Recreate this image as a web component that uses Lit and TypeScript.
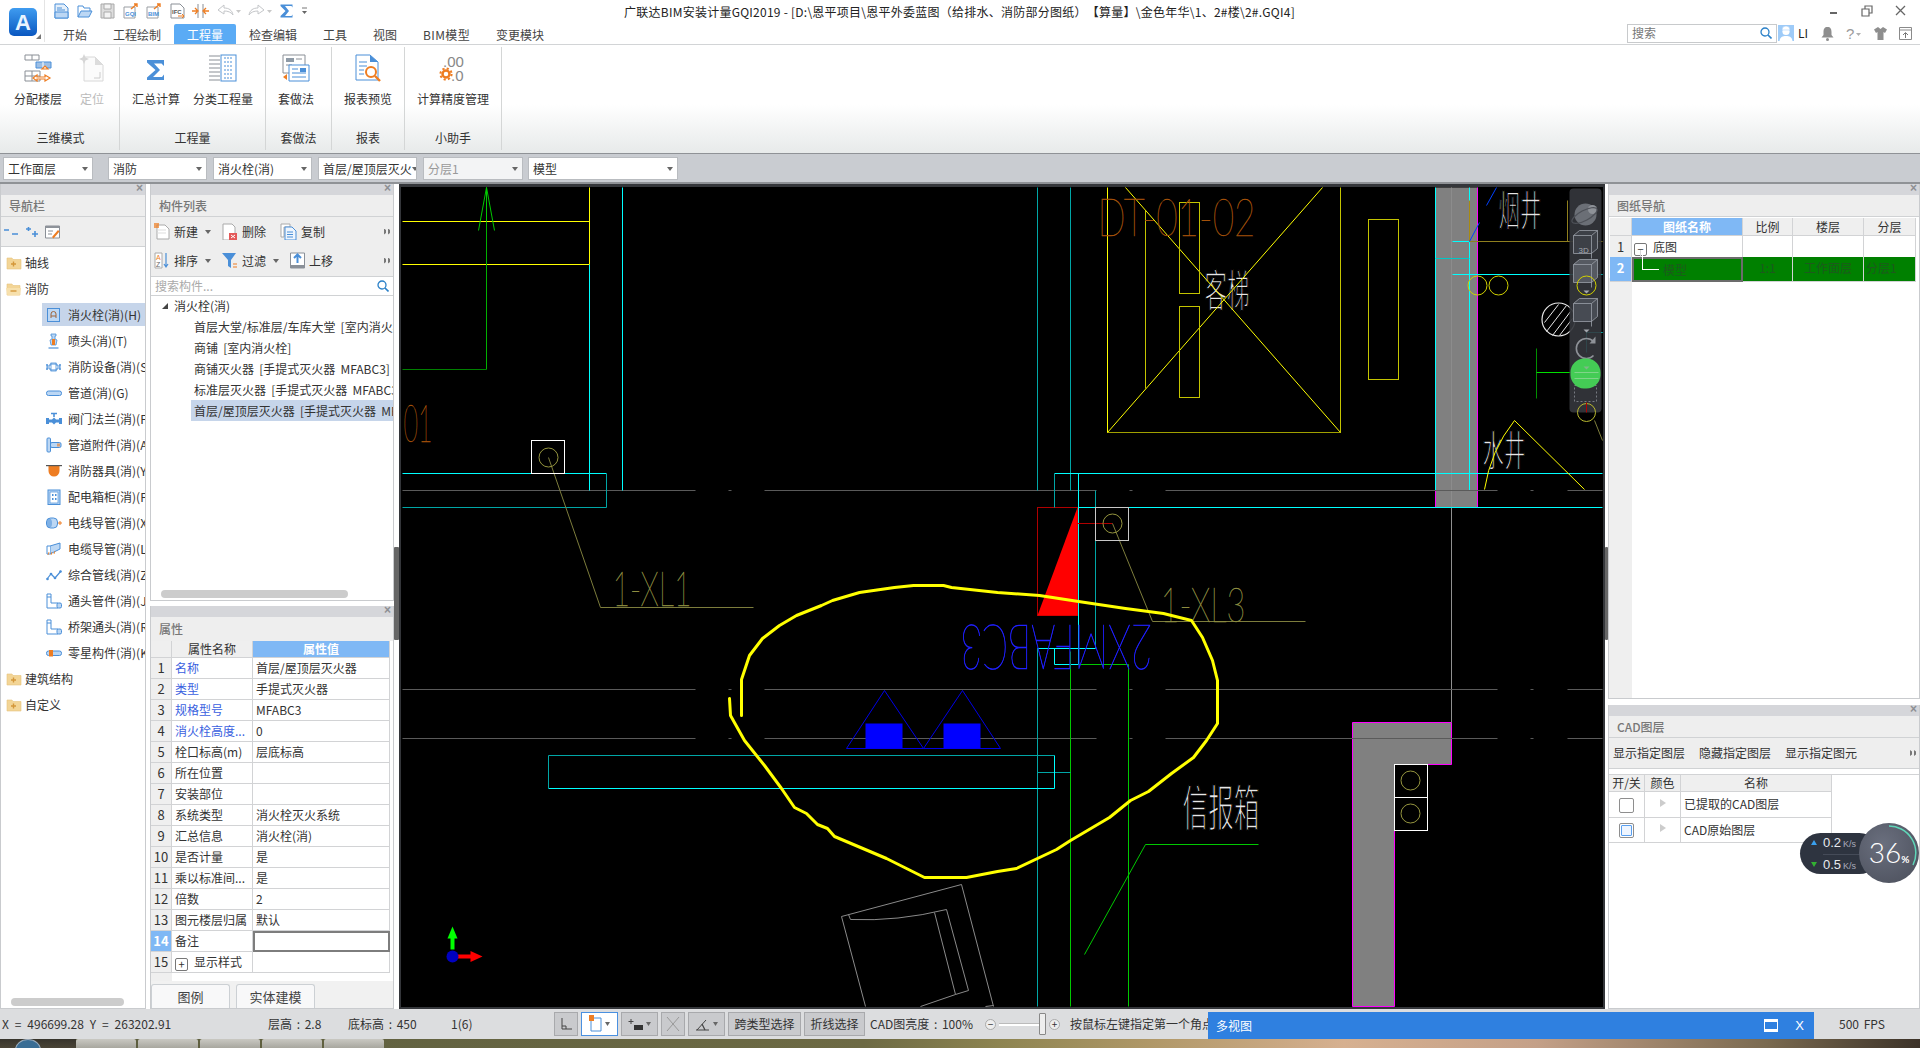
import { LitElement, html, css, svg } from 'lit';
import { customElement } from 'lit/decorators.js';

const BLUE = '#4a8fd8';
const PALE = '#bcd7f4';
const ORANGE = '#ee7d22';
const GRAY = '#8a8f96';

const ico = (w: number, h: number, body: unknown) =>
  html`<svg class="ico" width=${w} height=${h} viewBox="0 0 ${w} ${h}">${body}</svg>`;

const folder = (open: boolean, mark: string) => ico(16, 16, svg`
  <path d="M1 3h5l1 1.5h${open ? 7 : 8}V14H1z" fill="#f3d596" stroke="#e6c27c" stroke-width=".6"/>
  ${open ? svg`<path d="M0 7h15l-1.5 7.5H1.5z" fill="#f7e0ac"/>` : ''}
  <path d="${mark}" stroke="#d4973a" stroke-width="1.4" fill="none"/>`);

const navIcons = [
  svg`<rect x="1.5" y="1.5" width="12" height="13" fill="${PALE}" stroke="${BLUE}"/><path d="M5 11V7a2.5 2.5 0 015 0v4M5 9h5" fill="none" stroke="#a0643a"/>`,
  svg`<path d="M5 1h5v2H9v3l2 1-1 5H5L4 7l2-1V3H5z" fill="${PALE}" stroke="${BLUE}" stroke-width=".8"/><rect x="6" y="6" width="3" height="6" fill="${ORANGE}"/><path d="M2.5 15h10" stroke="${BLUE}" stroke-width="1.2"/>`,
  svg`<path d="M4 5h7v2h3V5v6-2h-3v2H4V9H1v2-6 2h3z" fill="none" stroke="${BLUE}"/><rect x="5" y="4" width="5" height="8" fill="none" stroke="${BLUE}" stroke-width=".8"/>`,
  svg`<rect x="0.5" y="6" width="15" height="4.5" rx="2" fill="${PALE}" stroke="${BLUE}"/>`,
  svg`<path d="M0 7h3v1.5h3l2-2 2 2h3V7h3v6h-3v-1.5H10l-2 2-2-2H3V13H0z" fill="${BLUE}"/><path d="M8 6V3M5 2.5h6" stroke="${BLUE}" stroke-width="1.6"/>`,
  svg`<rect x="1" y="1" width="3.5" height="14" rx="1" fill="${PALE}" stroke="${BLUE}"/><rect x="4.5" y="5.5" width="10.5" height="5" rx="1.5" fill="${PALE}" stroke="${BLUE}"/><rect x="11" y="6.5" width="3" height="3" fill="${ORANGE}" opacity=".6"/>`,
  svg`<path d="M0 2h16l-2.5 1v5a5.5 5.5 0 01-11 0V3z" fill="${ORANGE}"/><rect x="0" y="2" width="16" height="1.2" fill="#555"/>`,
  svg`<rect x="2" y="1" width="12" height="14.5" fill="${PALE}" stroke="${BLUE}"/><rect x="4" y="3" width="8" height="11" fill="#fff" stroke="${BLUE}" stroke-width=".7"/><path d="M6 5h1.5v2H6zM9 5h1.5v2H9zM6 9h1.5v2H6zM9 9h1.5v2H9z" fill="${BLUE}"/>`,
  svg`<rect x="0.5" y="3" width="11" height="10" rx="4" fill="${PALE}" stroke="${BLUE}"/><ellipse cx="3.5" cy="8" rx="2.5" ry="4.5" fill="${BLUE}" opacity=".55"/><path d="M12 8h4M14 6v4" stroke="${ORANGE}"/>`,
  svg`<path d="M4 5l10-3v6L4 13z" fill="${PALE}" stroke="${BLUE}"/><path d="M4 5h-3v8h3" fill="#fff" stroke="${BLUE}"/><path d="M2 14l1-3M5 14l1-3M8 13l1-3" stroke="${ORANGE}" stroke-width=".8"/>`,
  svg`<path d="M1 12l4-5 4 4 6-7" fill="none" stroke="${BLUE}" stroke-width="1.2"/><circle cx="1.5" cy="12" r="1.3" fill="${BLUE}"/><circle cx="5" cy="7" r="1.3" fill="${BLUE}"/><circle cx="9" cy="11" r="1.3" fill="${BLUE}"/><circle cx="14.5" cy="4.5" r="1.3" fill="${BLUE}"/>`,
  svg`<path d="M1 1h4v9h7v5H1z" fill="#fff" stroke="${BLUE}"/><rect x="11" y="10" width="4.5" height="5" rx="1.5" fill="${PALE}" stroke="${BLUE}"/><path d="M1 4h4" stroke="${BLUE}"/>`,
  svg`<path d="M1 1h4v9h7v5H1z" fill="#fff" stroke="${BLUE}"/><rect x="11" y="10" width="4.5" height="5" rx="1.5" fill="${PALE}" stroke="${BLUE}"/><path d="M1 4h4" stroke="${BLUE}"/>`,
  svg`<rect x="0.5" y="6" width="15" height="4.5" rx="2" fill="${PALE}" stroke="${BLUE}"/><rect x="3" y="5" width="4" height="6.5" fill="${ORANGE}"/>`,
];

const navItems = ['消火栓(消)(H)', '喷头(消)(T)', '消防设备(消)(S)', '管道(消)(G)', '阀门法兰(消)(F)', '管道附件(消)(A)', '消防器具(消)(Y)',
  '配电箱柜(消)(P)', '电线导管(消)(X)', '电缆导管(消)(L)', '综合管线(消)(Z)', '通头管件(消)(J)', '桥架通头(消)(R)', '零星构件(消)(K)'];

const compItems = ['首层大堂/标准层/车库大堂 [室内消火栓]', '商铺 [室内消火栓]', '商铺灭火器 [手提式灭火器 MFABC3]',
  '标准层灭火器 [手提式灭火器 MFABC3]', '首层/屋顶层灭火器 [手提式灭火器 MFABC3]'];

const propRows: [string, string, boolean][] = [
  ['名称', '首层/屋顶层灭火器', true], ['类型', '手提式灭火器', true], ['规格型号', 'MFABC3', true], ['消火栓高度...', '0', true],
  ['栓口标高(m)', '层底标高', false], ['所在位置', '', false], ['安装部位', '', false], ['系统类型', '消火栓灭火系统', false],
  ['汇总信息', '消火栓(消)', false], ['是否计量', '是', false], ['乘以标准间...', '是', false], ['倍数', '2', false],
  ['图元楼层归属', '默认', false], ['备注', '', false],
];

const CY = '#00ffff';
const TL = '#00a6a6';
const YE = '#ffff00';
const DY = '#c4c400';
const OL = '#7d7d3c';
const GR = '#00c800';
const LG = '#5a5a5a';
const MG = '#ff00ff';

const cadLines: [number, number, number, number, string][] = [
  [589, 187, 589, 264, YE], [402, 221, 589, 221, YE], [402, 264, 589, 264, YE], [589, 264, 589, 490, CY], [622, 187, 622, 490, CY],
  [486, 221, 486, 369, '#00b000'], [402, 369, 486, 369, '#008000'], [486, 187, 478, 230, GR], [486, 187, 494, 230, GR], [486, 187, 486, 221, GR],
  [402, 473, 606, 473, CY], [606, 473, 606, 507, TL], [402, 507, 606, 507, TL],
  [1037, 187, 1037, 490, TL], [1070, 187, 1070, 490, TL], [1054, 473, 1602, 473, CY], [1054, 473, 1054, 507, TL], [1078, 507, 1602, 507, CY],
  [1078, 473, 1078, 664, CY], [1095, 490, 1095, 648, TL], [1037, 648, 1037, 1006, TL], [1037, 648, 1095, 648, CY], [1054, 648, 1054, 664, CY], [1054, 664, 1078, 664, CY],
  [1070, 651, 1070, 1006, GR], [1128, 664, 1128, 1006, GR], [1078, 664, 1128, 664, GR], [1037, 772, 1070, 772, TL],
  [548, 755, 1054, 755, TL], [548, 788, 1054, 788, CY], [548, 755, 548, 788, TL], [1054, 755, 1054, 788, CY],
  [1084, 954, 1145, 844, GR], [1145, 844, 1258, 844, GR],
  [1077, 523, 1112, 523, '#b00000'], [1112, 523, 1152, 621, OL], [1152, 621, 1305, 621, OL], [548, 457, 600, 607, OL], [600, 607, 753, 607, OL],
  [1452, 241, 1469, 241, CY], [1469, 241, 1602, 241, '#8f7f1e'], [1452, 274, 1602, 274, CY], [1435, 258, 1469, 258, '#00c8c8'],
  [1469, 200, 1469, 241, '#a88a10'], [1567, 200, 1567, 241, '#8f7f1e'], [1469, 241, 1479, 222, '#0040ff'], [1486, 205, 1496, 187, '#0040ff'],
  [1145, 210, 1145, 388, DY], [1107, 432, 1340, 432, '#a0a000'], [1107, 187, 1107, 432, YE], [1340, 187, 1340, 432, DY], [1107, 432, 1322, 187, YE], [1340, 432, 1125, 187, YE],
  [1514, 420, 1584, 489, YE], [1536, 348, 1536, 398, '#009000'], [1536, 372, 1600, 372, '#00e000'],
  [1586, 332, 1602, 332, CY], [1586, 332, 1586, 352, CY], [1594, 420, 1602, 440, OL],
];

const grayBreaks = [[402, 695], [728, 731], [764, 1096], [1129, 1132], [1165, 1497], [1530, 1533], [1567, 1602]];
const scribble = '741,715 741,679 749,655 762,638 779,625 796,615 821,605 832,600 859,592 894,587 913,585 943,585 951,587 997,592 1039,595 1078,601 1125,608 1163,613 1191,620 1202,637 1212,660 1217,680 1217,723 1206,740 1193,757 1171,773 1148,791 1130,800 1109,817 1070,840 1056,849 1016,868 997,871 966,877 924,877 886,858 834,836 827,828 817,824 806,813 794,807 781,788 764,765 744,740 730,715 729,698';

const cube = (y: number, h: number, face: string) => svg`
  <path d="M1573 ${y + 5}l6-5h18v${h - 5}l-6 5h-18z" fill="${face}" stroke="#9aa0a8" stroke-width=".8"/>
  <path d="M1573 ${y + 5}h18l6-5M1591 ${y + 5}v${h}" fill="none" stroke="#9aa0a8" stroke-width=".8"/>`;

const cad = svg`
  <g class="cjk thin">
    <text x="1204" y="306" font-size="44" textLength="45" lengthAdjust="spacingAndGlyphs">客梯</text>
    <text x="1498" y="225" font-size="42" textLength="43" lengthAdjust="spacingAndGlyphs">烟井</text>
    <text x="1482" y="465" font-size="42" textLength="43" lengthAdjust="spacingAndGlyphs">水井</text>
    <text x="1182" y="825" font-size="49" textLength="77" lengthAdjust="spacingAndGlyphs">信报箱</text>
  </g>
  <path d="M1352 722h99v42h-57v242h-42z" fill="#808080" stroke="${MG}"/>
  <rect x="1435" y="187" width="42" height="320" fill="#808080"/>
  <path d="M1451 187v320" stroke="#8c8c8c"/>
  <path d="M1435 187v303" stroke="${CY}"/><path d="M1435 490v17M1477 187v320" stroke="${MG}"/><path d="M1469 187v303" stroke="${CY}"/>
  <path d="M1451 507v215" stroke="#909090"/>
  ${[490, 689, 738].map(y => grayBreaks.map(([a, b]) => svg`<line x1=${a} y1=${y} x2=${b} y2=${y} stroke=${LG} stroke-width="1"/>`))}
  <rect x="1037" y="507" width="40" height="108" fill="none" stroke="#b00000"/>
  <path d="M1077 507L1037 615H1077z" fill="#ff0000"/>
  ${cadLines.map(([a, b, c, d, s]) => svg`<line x1=${a} y1=${b} x2=${c} y2=${d} stroke=${s} stroke-width="1"/>`)}
  <path d="M1514 420Q1490 450 1484 489" fill="none" stroke="${YE}"/>
  <g fill="none" stroke="${DY}"><rect x="1179" y="202" width="20" height="91"/><rect x="1179" y="306" width="20" height="91"/><rect x="1368" y="219" width="30" height="160"/></g>
  <g fill="none" stroke="#ffffff"><rect x="531" y="440" width="33" height="33"/><rect x="1394" y="764" width="33" height="33"/><rect x="1394" y="797" width="33" height="33"/></g>
  <rect x="1095" y="507" width="33" height="33" fill="none" stroke="#c8c8c8"/>
  <g fill="none" stroke="#95953f"><circle cx="548" cy="457" r="9.5"/><circle cx="1112" cy="523" r="9.5"/><circle cx="1410" cy="780" r="9.5"/><circle cx="1410" cy="813" r="9.5"/></g>
  <g fill="none" stroke="#d0d000"><circle cx="1477" cy="285" r="9.5"/><circle cx="1498" cy="285" r="9.5"/></g>
  <circle cx="1558" cy="319" r="16.5" fill="none" stroke="#e8e8e8" stroke-width="1.2"/>
  <path d="M1546 331l20-26M1552 335l18-24M1559 335l13-17M1544 322l14-18" stroke="#e8e8e8"/>
  <path d="M846 748L884 690 923 748zM923 748L962 690 1000 748z" fill="none" stroke="#0000e6"/>
  <rect x="865" y="723" width="37" height="25" fill="#0000ff"/><rect x="943" y="723" width="37" height="25" fill="#0000ff"/>
  <g fill="none" stroke="#8a8a8a">
    <path d="M841 916L961 884 993 1006M841 916L865 1006"/>
    <path d="M848 914l2 5Q897 921 946 909L968 990 955 994 920 1006M934 912L955 994M985 1006l8-1"/>
  </g>
  <g class="cad">
    <text x="403" y="441" font-size="52" fill="#a5520a" stroke="#a5520a" textLength="29" lengthAdjust="spacingAndGlyphs">01</text>
    <text x="1097" y="235" font-size="52" fill="#a5520a" stroke="#a5520a" textLength="158" lengthAdjust="spacingAndGlyphs">DT-01-02</text>
    <text x="612" y="605" font-size="48" fill="#8d8d40" stroke="#8d8d40" textLength="79" lengthAdjust="spacingAndGlyphs">1-XL1</text>
    <text x="1160" y="621" font-size="48" fill="#8d8d40" stroke="#8d8d40" textLength="85" lengthAdjust="spacingAndGlyphs">1-XL3</text>
    <text class="flip" transform="rotate(180 1056 649)" x="960" y="674" font-size="62" fill="#2020ff" stroke="#2020ff" textLength="192" lengthAdjust="spacingAndGlyphs">2XMFABC3</text>
  </g>
  <polyline points=${scribble} fill="none" stroke="${YE}" stroke-width="3" stroke-linejoin="round" stroke-linecap="round"/>
  <rect x="1569" y="188" width="32" height="224" rx="4" fill="#34363c" fill-opacity=".92"/>
  <circle cx="1585" cy="214" r="11" fill="#6b6f76"/><circle cx="1592" cy="209" r="4.5" fill="#8e9298"/><ellipse cx="1584" cy="215" rx="14" ry="5" transform="rotate(-28 1584 215)" fill="none" stroke="#4e5158" stroke-width="1.2"/>
  ${cube(230, 23, '#3d4047')}<text x="1578" y="252" font-size="8" fill="#a4a8ae" font-family="Liberation Sans">3D</text>
  ${cube(259, 23, '#565a62')}
  <path d="M1583 290h6l-3 3zM1583 329h6l-3 3z" fill="#a4a8ae"/>
  ${cube(298, 23, '#474b53')}
  <path d="M1593 341a10 10 0 100 14" fill="none" stroke="#8e9298" stroke-width="1.6"/><path d="M1595 336v7h-6z" fill="#8e9298"/>
  <rect x="1574" y="385" width="22" height="16" fill="none" stroke="#777b82" stroke-dasharray="2 2"/>
  <g fill="none" stroke="#d0d000"><circle cx="1586" cy="285" r="9.5" stroke-width="1"/></g>
  <circle cx="1586" cy="412" r="9" fill="none" stroke="#b8b830"/>
  <path d="M1586 412V402" stroke="#b00000"/>
  <path d="M1570 372a14 14 0 0114-14h3a14 14 0 0113 14v3a14 14 0 01-14 13h-3a14 14 0 01-13-13z" fill="#44cc55"/>
  <path d="M1574 372h24M1574 378h24" stroke="#9ad8a0" opacity=".7"/><path d="M1583 366h6l-3 3z" fill="#7fb888"/>
  <g>
    <path d="M452 949v-13" stroke="#00ff00" stroke-width="4"/><path d="M447 938L452 926 457 938z" fill="#00ff00"/>
    <path d="M456 956h15" stroke="#ff0000" stroke-width="4"/><path d="M470 950.5L482 956 470 961.5z" fill="#ff0000"/>
    <circle cx="452" cy="956" r="6" fill="#0000c0"/>
  </g>`;

const dbl = html`<span class="dbl"></span>`;

@customElement('app-root')
export class AppRoot extends LitElement {
  static styles = css`
    :host { display: block; width: 1920px; height: 1048px; overflow: hidden; position: relative; background: #fff; color: #333;
      font: 12px/16px "Noto Sans CJK SC", "Liberation Sans", sans-serif; }
    .ico { display: block; flex: none; }
    .head { height: 44px; display: flex; border-bottom: 1px solid #d2d4d6; }
    .logo { width: 45px; flex: none; padding: 8px 0 0 9px; box-sizing: border-box; border-right: 1px solid #e4e4e4; height: 42px; }
    .head-main { flex: 1; }
    .title-row { height: 24px; display: flex; align-items: flex-start; }
    .qat { width: 579px; flex: none; display: flex; align-items: center; height: 22px; padding-left: 9px; box-sizing: border-box; gap: 7.5px; }
    .title { line-height: 24px; color: #222; white-space: nowrap; width: 690px; text-spacing-trim: space-all; letter-spacing: .25px; }
    .winctl { margin-left: auto; display: flex; gap: 20px; padding: 4px 12px 0 0; }
    .tab-row { height: 20px; display: flex; align-items: flex-end; padding-left: 5px; position: relative; }
    .tab { height: 20px; line-height: 21px; padding: 0 13px; color: #444; }
    .tab.on { background: #5aabf5; color: #fff; border-radius: 2px 2px 0 0; }
    .tab.wide { letter-spacing: .35px; }
    .tools { margin-left: auto; display: flex; align-items: center; height: 20px; margin-bottom: 1px; padding-right: 7px; }
    .search { width: 150px; height: 19px; box-sizing: border-box; border: 1px solid #c8cacc; display: flex; align-items: center; justify-content: space-between; padding: 0 4px; color: #777; }
    .avatar { margin-left: 1px; }
    .li { margin: 0 14px 0 4px; width: 9px; color: #222; }
    .tool-i { margin-right: 12px; }
    .tool-i:last-child { margin-right: 0; }
    .ribbon { height: 108px; display: flex; background: linear-gradient(#fff 0, #fff 55%, #e7eaea 100%); border-bottom: 1px solid #8f9296; }
    .group { display: flex; flex-direction: column; padding: 0 12px; border-right: 1px solid #d4d6d6; margin: 2px 0 3px; height: 103px; box-sizing: border-box; }
    .g1 { padding-left: 14px; width: 120px; } .g2 { width: 146px; } .g3 { width: 66px; } .g4 { width: 73px; } .g5 { width: 97px; }
    .g-items { display: flex; gap: 17px; height: 78px; }
    .g2 .g-items { gap: 13px; }
    .r-item { display: flex; flex-direction: column; align-items: center; padding-top: 7px; white-space: nowrap; color: #333; }
    .r-icon { height: 37px; }
    .r-item span { line-height: 16px; }
    .dim { color: #bbb; }
    .g-label { text-align: center; line-height: 16px; padding-top: 5px; color: #333; margin: 0 -12px; }
    .combos { height: 25px; background: #c9ccd1; border-bottom: 2px solid #8f9296; display: flex; padding: 3px 0 0 3px; }
    .combo { height: 23px; box-sizing: border-box; background: #fff; border: 1px solid #b9bcc0; display: flex; align-items: center; justify-content: space-between; padding: 0 4px; color: #333; overflow: hidden; white-space: nowrap; margin-left: 6px; }
    .combo i { flex: none; width: 0; height: 0; border: 3px solid transparent; border-top: 4px solid #666; border-bottom: 0; }
    .combo.off { background: #f3f4f5; color: #999; }
    .c1 { width: 90px; margin-left: 0; } .c2 { width: 99px; margin-left: 15px; } .c3, .c4 { width: 99px; } .c5 { width: 100px; }
    .c6 { width: 150px; margin-left: 5px; }
    .main { height: 825px; display: grid; grid-template-columns: 146px 4px 244px 5px 1206px 3px 312px; }
    .col { display: flex; flex-direction: column; min-width: 0; }
    .panel { display: flex; flex-direction: column; min-height: 0; overflow: hidden; background: #fff; border: 1px solid #c9cbce; border-width: 0 1px 1px 1px; box-sizing: border-box; position: relative; }
    .closebar { height: 11px; background: #d5d6da; flex: none; position: relative; }
    .closebar::after { content: "×"; position: absolute; right: 2px; top: -3px; font: bold 12px/14px "Liberation Sans", sans-serif; color: #8d8f93; }
    .ptitle { height: 21px; line-height: 21px; flex: none; padding-left: 8px; color: #777; background: #eee; border-bottom: 1px solid #d0d2d4; font-weight: 500; }
    .nav-tools { height: 29px; flex: none; background: #eee; border-bottom: 1px solid #d0d2d4; display: flex; align-items: center; gap: 6px; padding-left: 2px; }
    .tree { flex: 1; padding-top: 3px; overflow: hidden; white-space: nowrap; min-height: 0; display: flex; flex-direction: column; }
    .folder { height: 26px; flex: none; display: flex; align-items: center; gap: 3px; padding-left: 5px; }
    .child { height: 23px; flex: none; margin: 1px 0 2px 41px; display: flex; align-items: center; gap: 6px; padding-left: 4px; overflow: hidden; }
    .child.on, .comp.on { background: #c6d5ea; }
    .nav-scroll { height: 8px; margin: 0 21px 2px 10px; border-radius: 4px; background: #ccc; flex: none; }
    .mid-tools { flex: none; background: #eee; border-bottom: 1px solid #d0d2d4; height: 59px; }
    .mt-row { height: 29px; display: flex; align-items: center; padding-left: 3px; position: relative; }
    .mt { display: flex; align-items: center; gap: 4px; }
    .mt.s11 { margin-left: 11px; } .mt.s14 { margin-left: 14px; }
    .caret { width: 0; height: 0; border: 3px solid transparent; border-top: 4px solid #666; border-bottom: 0; margin-left: 7px; }
    .dbl { position: absolute; right: 1px; top: 50%; margin-top: -3px; width: 8px; height: 6px; background:
      linear-gradient(to right, #777 0 50%, transparent 50%) 0 0 / 4px 6px repeat-x; clip-path: polygon(0 0, 50% 50%, 50% 0, 100% 50%, 50% 100%, 50% 50%, 0 100%); }
    .csearch { height: 18px; flex: none; display: flex; align-items: center; justify-content: space-between; padding: 0 4px; color: #aaa; border-bottom: 1px solid #d0d2d4; }
    .ctree { flex: 1; white-space: nowrap; overflow: hidden; }
    .ctop { height: 20px; line-height: 20px; display: flex; align-items: center; padding-left: 11px; gap: 6px; }
    .tri { width: 0; height: 0; border-left: 6px solid transparent; border-bottom: 6px solid #444; }
    .comp { height: 21px; line-height: 21px; margin-left: 40px; padding-left: 3px; word-spacing: 2.5px; overflow: hidden; }
    .h-scroll { height: 8px; flex: none; margin: 0 45px 2px 10px; border-radius: 4px; background: #ccc; }
    .gap-h { flex: none; background: #fff; }
    .gap-h.a { height: 5px; } .gap-h.b { height: 6px; }
    .comp-panel { height: 417px; flex: none; } .draw-panel { height: 515px; flex: none; } .grow { flex: 1; }
    .prop-title { border-bottom: 0; height: 24px; line-height: 23px; }
    .ptable { flex: 1; background: #fff; min-height: 0; display: flex; flex-direction: column; }
    .prow { display: grid; grid-template-columns: 21px 81px 137px; height: 21px; line-height: 20px; box-sizing: border-box; flex: none; }
    .prow > div { border-right: 1px solid #d2d3d5; border-bottom: 1px solid #d2d3d5; padding-left: 3px; overflow: hidden; white-space: nowrap; }
    .prow.hd { height: 17px; line-height: 16px; }
    .prow.hd > div { background: #efefef; text-align: center; padding: 0; }
    .prow.hd > .val { background: #7fb8f5; color: #fff; font-weight: 700; }
    .prow .no { background: #efefef; text-align: center; padding: 0; font-size: 13px; }
    .prow .no.on { background: #7fb8f5; color: #fff; font-weight: 700; }
    .link { color: #3a5fe0; }
    .edit { border: 2px solid #7d7d7d !important; }
    .pm { display: inline-flex; width: 11px; height: 11px; border: 1px solid #777; border-radius: 2px; align-items: center; justify-content: center; line-height: 10px; font-size: 11px; margin-right: 6px; vertical-align: -2px; }
    .grid-foot { flex: 1; background: linear-gradient(to right, #efefef 21px, #fff 21px); }
    .ptabs { height: 27px; flex: none; background: #f1f1f1; display: flex; gap: 6px; align-items: flex-end; padding-top: 3px; box-sizing: border-box; }
    .ptab { width: 79px; height: 24px; line-height: 23px; box-sizing: border-box; text-align: center; background: #f8f8f9; border: 1px solid #ccd0d4; border-bottom: 0; border-radius: 3px 3px 0 0; color: #444; font-size: 13px; }
    .canvas { background: #000; border-style: solid; border-color: #34363a; border-width: 3px 2px 2px 2px; position: relative; overflow: hidden; }
    .canvas svg { display: block; }
    .cad text { font-family: "Lato", "Roboto", "Liberation Sans", sans-serif; font-weight: 100; stroke-width: .45; }
    .cad text.flip { stroke-width: .7; }
    .cjk text { font-family: "Noto Sans CJK SC", sans-serif; fill: #e6e6e6; stroke: #000; stroke-width: 1.7; }
    .split { background: #fff; position: relative; }
    .split::after { content: ""; position: absolute; left: 0; right: 0; top: 363px; height: 93px; background: #666; border-radius: 1px; }
    .dtable { padding-left: 1px; }
    .drow { display: grid; grid-template-columns: 22px 111px 50px 71px 52px; height: 21px; line-height: 21px; }
    .drow > div { border-right: 1px solid #d2d3d5; border-bottom: 1px solid #d2d3d5; text-align: center; box-sizing: border-box; position: relative; white-space: nowrap; }
    .drow.hd { height: 18px; line-height: 17px; margin-top: 1px; }
    .drow.hd > div { background: #efefef; }
    .drow.hd > .val { background: #7fb8f5; color: #fff; font-weight: 700; }
    .drow .no { background: #efefef; font-size: 13px; }
    .drow .no.on { background: #7fb8f5; color: #fff; font-weight: 700; }
    .left { text-align: left !important; padding-left: 2px; }
    .g { background: #008000; color: #1d5a1d; }
    .sel { border: 2px solid #6c6c6c !important; }
    .model { padding-left: 27px; }
    .conn { position: absolute; left: 8px; top: -9px; width: 16px; height: 19px; border-left: 1px solid #fff; border-bottom: 1px solid #fff; }
    .conn.lt { border-bottom: 0; border-color: #d8d8d8; top: 14px; height: 8px; left: 8px; }
    .dfoot { flex: 1; background: linear-gradient(to right, #efefef 23px, #fff 23px); }
    .layer-tools { height: 30px; flex: none; background: #eee; border-bottom: 1px solid #d0d2d4; display: flex; align-items: center; gap: 14px; padding-left: 4px; position: relative; white-space: nowrap; font-size: 12px; }
    .lrow { display: grid; grid-template-columns: 36px 36px 151px; }
    .lrow > div { border-right: 1px solid #d2d3d5; border-bottom: 1px solid #d2d3d5; white-space: nowrap; box-sizing: border-box; display: flex; align-items: center; padding-left: 3px; }
    .lrow.hd { height: 17px; margin-top: 5px; border-top: 1px solid #d2d3d5; }
    .lrow.hd > div { background: #efefef; justify-content: center; padding: 0; line-height: 16px; }
    .lrow.b { height: 25.5px; }
    .lrow .c { justify-content: center; padding: 0; }
    .chk { width: 13px; height: 13px; border: 1px solid #8e8e8e; border-radius: 2px; margin-top: 2px; background: #fff; display: flex; align-items: center; justify-content: center; }
    .chk i { width: 9px; height: 9px; border: 1px solid #5aa0f0; border-radius: 1px; background: #eef5ff; }
    .ptri { width: 0; height: 0; border-left: 6px solid #ccc; border-top: 4px solid transparent; border-bottom: 4px solid transparent; margin-bottom: 3px; }
    .status { height: 30px; background: #dcdddf; display: flex; align-items: center; position: relative; white-space: nowrap; overflow: hidden; word-spacing: 2px; }
    .s-coord { width: 268px; padding-left: 2px; box-sizing: border-box; flex: none; word-spacing: 3.2px; }
    .s-h { width: 80px; flex: none; } .s-b { width: 103px; flex: none; } .s-n { width: 103px; flex: none; }
    .sb { height: 24px; box-sizing: border-box; background: #c9cacd; border: 1px solid #a8a9ac; display: flex; align-items: center; justify-content: center; margin-right: 3px; flex: none; gap: 2px; }
    .sb.w24 { width: 24px; } .sb.w36 { width: 37px; } .sb.sel2 { background: #fff; border: 1px solid #4a90e0; }
    .sb.t1 { width: 73px; } .sb.t2 { width: 61px; margin-right: 5px; }
    .zoom-c { width: 9px; height: 9px; border: 1px solid #aaa; border-radius: 50%; background: #eee; display: flex; align-items: center; justify-content: center; line-height: 8px; font-size: 10px; margin: 0 2px; flex: none; }
    .zoom-c.first { margin-left: 12px; }
    .track { width: 47px; height: 2px; background: #fff; border-top: 1px solid #bbb; position: relative; margin: 0 1px; flex: none; }
    .thumb { position: absolute; right: 0; top: -11px; width: 7px; height: 22px; background: #eee; border: 1px solid #888; border-radius: 1px; box-sizing: border-box; }
    .hint { margin-left: 8px; flex: none; }
    .fps { position: absolute; left: 1839px; top: 7px; }
    .multi { position: absolute; left: 1208px; top: 3px; width: 606px; height: 27px; background: #2f80e0; color: #fff; display: flex; align-items: center; padding: 0 10px 0 8px; box-sizing: border-box; }
    .multi b { font-weight: 400; flex: 1; }
    .multi .sq { width: 14px; height: 13px; box-sizing: border-box; border: 1px solid #fff; border-top-width: 3px; border-bottom-width: 3px; margin-right: 17px; }
    .multi .x { font: 13px "Liberation Sans", sans-serif; }
    .task { height: 9px; display: flex; background: linear-gradient(90deg, #5a5c3e 0, #6d6a44 45%, #8d8450 52%, #b09868 60%, #d6b090 70%, #c4a088 80%, #7a6a50 92%, #3c3228 100%); overflow: hidden; }
    .orb { width: 76px; flex: none; background: linear-gradient(#37342c, #4a4436); position: relative; }
    .orb::after { content: ""; position: absolute; left: 15px; top: 0; width: 24px; height: 20px; border-radius: 50%; background: #3a6d94; border: 1px solid #9ab; }
    .tbtn { width: 60px; margin-right: 2px; flex: none; background: linear-gradient(#c9c8c2, #a8a79f); border-radius: 2px 2px 0 0; position: relative; }
    .speed { position: absolute; left: 1800px; top: 833px; width: 120px; height: 60px; }
    .s-pill { position: absolute; left: 0; top: 0; width: 80px; height: 41px; border-radius: 21px; background: #2e3440; color: #e8eaee; font: 13px/20px "Liberation Sans", sans-serif; padding: 0 0 0 23px; box-sizing: border-box; }
    .s-pill div { height: 20.5px; line-height: 20.5px; white-space: nowrap; display: flex; gap: 1px; position: relative; }
    .s-pill div + div { border-top: 1px solid #454b58; }
    .s-pill small { font: 400 9px/22px "Liberation Sans", sans-serif; color: #aab; padding-left: 1px; }
    .s-pill em { position: absolute; left: -12px; top: 7px; width: 0; height: 0; border: 3px solid transparent; }
    .s-pill em.u { border-bottom: 5px solid #3aa0ee; border-top: 0; }
    .s-pill em.d { border-top: 5px solid #32b032; border-bottom: 0; }
    .s-circle { position: absolute; left: 59px; top: -10px; width: 60px; height: 60px; border-radius: 50%; background: radial-gradient(circle at 40% 35%, #6a6f7e, #4a4e5a); color: #fff; font: 300 28px/58px "Lato", "Liberation Sans", sans-serif; text-align: center; }
    .s-circle small { font-size: 10px; font-weight: 700; }
    .s-circle svg { position: absolute; left: 0; top: 0; }
  `;

  private qat() {
    const gdoc = (t: string) => ico(16, 16, svg`<path d="M1 4h11v11H1z" fill="#fff" stroke="#9a9ea3"/><text x="2" y="13" font-size="6" fill="#4a8fd8" font-family="Liberation Sans" font-weight="700">${t}</text><path d="M8 6l6-5M11 1h3v3" stroke="${ORANGE}" fill="none" stroke-width="1.4"/>`);
    return html`<div class="qat">
      ${ico(15, 16, svg`<path d="M1 1h9l4 4v10H1z" fill="#e4effa" stroke="${BLUE}"/><path d="M1 9h13v6H1z" fill="${PALE}" stroke="${BLUE}"/><path d="M3 5h5M3 7h8" stroke="${BLUE}"/>`)}
      ${ico(16, 16, svg`<path d="M1 14V3h5l1 2h6v3" fill="#fff" stroke="${BLUE}"/><path d="M1 14l3-6h11l-3 6z" fill="${PALE}" stroke="${BLUE}"/>`)}
      ${ico(15, 16, svg`<path d="M1 1h13v14H1z" fill="#ddd" stroke="#aaa"/><path d="M4 1h7v5H4zM4 9h7v6H4z" fill="#f3f3f3" stroke="#aaa"/>`)}
      ${gdoc('GQI')}${gdoc('BIM')}
      ${ico(15, 16, svg`<path d="M1 1h9l4 4v10H1z" fill="#fff" stroke="#8a8f96"/><text x="2" y="11" font-size="6" fill="#555" font-family="Liberation Sans" font-weight="700">IFC</text><path d="M8 13h6M12 11l2 2-2 2" stroke="${ORANGE}" fill="none"/>`)}
      ${ico(17, 16, svg`<path d="M6 1v14M11 1v14" stroke="#8a8f96"/><path d="M0 8h5M3 5l3 3-3 3M17 8h-5M14 5l-3 3 3 3" fill="none" stroke="${ORANGE}" stroke-width="1.3"/>`)}
      ${ico(24, 16, svg`<path d="M1 7l6-5v3c5 0 8 2 9 7-2-3-5-4-9-4v3z" fill="#fff" stroke="#c4c6c9"/><path d="M19 7h5l-2.500 3z" fill="#c8c8c8"/>`)}
      ${ico(24, 16, svg`<path d="M16 7l-6-5v3c-5 0-8 2-9 7 2-3 5-4 9-4v3z" fill="#fff" stroke="#c4c6c9"/><path d="M19 7h5l-2.500 3z" fill="#c8c8c8"/>`)}
      ${ico(14, 14, svg`<path d="M.5.5h12v3l-1-1.500H5L9 7 5 12h6.500l1-1.500v3H.5v-1.500L5.500 7 .5 2z" fill="${BLUE}"/>`)}
      ${ico(7, 10, svg`<path d="M1 2h5" stroke="#777"/><path d="M1 5h5l-2.500 3z" fill="#666"/>`)}
    </div>`;
  }

  private head() {
    const title = '广联达BIM安装计量GQI2019 - [D:\\恩平项目\\恩平外委蓝图（给排水、消防部分图纸）【算量】\\金色年华\\1、2#楼\\2#.GQI4]';
    return html`<div class="head">
      <div class="logo">
        <svg class="ico" width="32" height="32" viewBox="0 0 32 32">
          <defs><linearGradient id="lg" x1="0" y1="0" x2="0" y2="1"><stop offset="0" stop-color="#3f9cf0"/><stop offset="1" stop-color="#0a57c0"/></linearGradient></defs>
          <rect width="28" height="28" rx="5" fill="url(#lg)"/>
          <text x="14" y="22" text-anchor="middle" font-size="22" font-weight="700" fill="#eaf4ff" font-family="Liberation Sans">A</text>
          <path d="M32 26v5h-5z" fill="#777"/>
        </svg>
      </div>
      <div class="head-main">
        <div class="title-row">
          ${this.qat()}
          <div class="title">${title}</div>
          <div class="winctl">
            ${ico(14, 14, svg`<path d="M4 9h7" stroke="#666" stroke-width="2"/>`)}
            ${ico(14, 14, svg`<path d="M2 5h7v7H2zM5 5V2h7v7H9" fill="none" stroke="#666" stroke-width="1.2"/>`)}
            ${ico(14, 14, svg`<path d="M2 2l9 9M11 2l-9 9" stroke="#666" stroke-width="1.3"/>`)}
          </div>
        </div>
        <div class="tab-row">
          ${['开始', '工程绘制', '工程量', '检查编辑', '工具', '视图', 'BIM模型', '变更模块'].map((t, i) => html`<div class="tab ${i === 2 ? 'on' : ''} ${i === 6 ? 'wide' : ''}">${t}</div>`)}
          <div class="tools">
            <div class="search">搜索${ico(12, 12, svg`<circle cx="5" cy="5" r="4" fill="none" stroke="#2a80c8" stroke-width="1.3"/><path d="M8 8l3.5 3.5" stroke="#2a80c8" stroke-width="1.6"/>`)}</div>
            <div class="avatar">${ico(16, 16, svg`<rect width="16" height="16" fill="#9ecbf8"/><circle cx="8" cy="6.5" r="3.6" fill="#fff"/><path d="M4 5a4 4 0 018 0z" fill="#fff" stroke="#9ecbf8" stroke-width=".5"/><path d="M1.5 16c.5-4 3-5 6.5-5s6 1 6.5 5z" fill="#fff"/>`)}</div>
            <span class="li">LI</span>
            <div class="tool-i">${ico(13, 15, svg`<path d="M6.5 1c3 0 4 2 4 5v3l2 2.5H.5L2.500 9V6c0-3 1-5 4-5z" fill="#8e8e8e"/><circle cx="6.5" cy="13.500" r="1.500" fill="#8e8e8e"/>`)}</div>
            <div class="tool-i">${ico(16, 15, svg`<text x="0" y="13" font-size="15" fill="#9a9a9a" font-family="Liberation Sans">?</text><path d="M10 7h5l-2.500 3z" fill="#b0b0b0"/>`)}</div>
            <div class="tool-i">${ico(13, 13, svg`<path d="M4 0L0 2.500 2 6l1.500-1v8h6V5L11 6l2-3.500L9 0 6.500 2z" fill="#8e8e8e"/>`)}</div>
            <div class="tool-i">${ico(14, 13, svg`<path d="M.5.5h12v12H.5zM.5 3h12" fill="#fff" stroke="#8a8a8a"/><path d="M6.500 11V6M4 8l2.500-2.500L9 8" fill="none" stroke="#777"/>`)}</div>
          </div>
        </div>
      </div>
    </div>`;
  }

  private ribbon() {
    const item = (icon: unknown, label: string, dim = false) => html`<div class="r-item ${dim ? 'dim' : ''}"><div class="r-icon">${icon}</div><span>${label}</span></div>`;
    return html`<div class="ribbon">
      <div class="group g1">
        <div class="g-items">
          ${item(ico(28, 28, svg`<path d="M1 1h14v5H1zM8 1v5M1 17h15v10H1zM1 22h15M8 17v10" fill="#fff" stroke="${GRAY}"/><path d="M12 8h15v6H12z" fill="#9cbfe6" stroke="${BLUE}"/><path d="M19 8v6" stroke="#fff"/><path d="M13 21l-4 3 4 3v-2h8v2l5-3-5-3v2h-8zM21 15h-3l3-3 3 3z" fill="#fff" stroke="${ORANGE}" stroke-width="1.2"/>`), '分配楼层')}
          ${item(ico(26, 28, svg`<path d="M5 3h11l8 8v16H5z" fill="#fbfbfb" stroke="#d8d8d8"/><path d="M16 3v8h8z" fill="#dcdcdc"/><path d="M5 0l1.500 3.500L10 5 6.500 6.500 5 10 3.500 6.500 0 5l3.500-1.500z" fill="#d6d6d6"/><path d="M21 18v6h-6" fill="none" stroke="#ccc"/>`), '定位', true)}
        </div>
        <div class="g-label">三维模式</div>
      </div>
      <div class="group g2">
        <div class="g-items">
          ${item(ico(20, 28, svg`<path d="M1 6h17v6l-2.500-2.500H8l6 6.500-7 7h9l2-2.500V26H1v-2.500L9.500 16 1 8.500z" fill="${BLUE}"/>`), '汇总计算')}
          ${item(ico(28, 28, svg`<path d="M0 2h11M0 6h11M0 10h11M0 14h11M0 18h11M0 22h11M0 26h11" stroke="${GRAY}"/><rect x="12" y="1" width="15" height="26" fill="#fff" stroke="${BLUE}"/><path d="M15 4h9M15 8h9M15 12h9M15 16h9M15 20h9M15 24h9" stroke="${BLUE}" stroke-dasharray="2 1"/>`), '分类工程量')}
        </div>
        <div class="g-label">工程量</div>
      </div>
      <div class="group g3">
        <div class="g-items">
          ${item(ico(28, 28, svg`<path d="M1 1h22v18H1z" fill="#fff" stroke="${GRAY}"/><rect x="4" y="4" width="8" height="4" fill="#8e9aa6"/><path d="M14 5h6M4 11h6" stroke="${GRAY}"/><path d="M7 11h20v16H7z" fill="#fff" stroke="${BLUE}"/><rect x="18" y="14" width="6" height="4" fill="${BLUE}"/><path d="M10 15h6M10 19h14M10 23h14" stroke="${BLUE}"/><path d="M1 23l4 3v-6z" fill="${ORANGE}"/>`), '套做法')}
        </div>
        <div class="g-label">套做法</div>
      </div>
      <div class="group g4">
        <div class="g-items">
          ${item(ico(26, 28, svg`<path d="M1 1h14l8 7v18H1z" fill="#fff" stroke="${BLUE}"/><path d="M15 1v7h8z" fill="${BLUE}"/><path d="M4 8h8M4 12h8M4 16h5M4 20h5" stroke="${BLUE}"/><circle cx="16" cy="18" r="5" fill="#fff" stroke="${ORANGE}" stroke-width="2"/><path d="M20 22l5 5" stroke="${ORANGE}" stroke-width="2.400"/>`), '报表预览')}
        </div>
        <div class="g-label">报表</div>
      </div>
      <div class="group g5">
        <div class="g-items">
          ${item(ico(28, 28, svg`<text x="4" y="13" font-size="15" fill="#888" font-family="Liberation Sans">.00</text><text x="12" y="27" font-size="15" fill="#888" font-family="Liberation Sans">.0</text><circle cx="7" cy="20" r="3.500" fill="#fff" stroke="${ORANGE}" stroke-width="2.500"/><circle cx="7" cy="20" r="5.600" fill="none" stroke="${ORANGE}" stroke-width="2" stroke-dasharray="2.200 2.200"/>`), '计算精度管理')}
        </div>
        <div class="g-label">小助手</div>
      </div>
    </div>`;
  }

  private combos() {
    return html`<div class="combos">
      <div class="combo c1">工作面层<i></i></div>
      <div class="combo c2">消防<i></i></div>
      <div class="combo c3">消火栓(消)<i></i></div>
      <div class="combo c4">首层/屋顶层灭火<i></i></div>
      <div class="combo c5 off">分层1<i></i></div>
      <div class="combo c6">模型<i></i></div>
    </div>`;
  }

  private navPanel() {
    return html`<div class="panel grow">
      <div class="closebar"></div>
      <div class="ptitle">导航栏</div>
      <div class="nav-tools">
        ${ico(16, 12, svg`<path d="M1 4h5M9 8h6" stroke="${BLUE}" stroke-width="1.6"/>`)}
        ${ico(14, 12, svg`<path d="M1 3h5M3.500 1v4M7 8h6M10 5v6" stroke="${BLUE}" stroke-width="1.600"/>`)}
        ${ico(15, 14, svg`<path d="M.5 1h14v12H.5z" fill="#fff" stroke="${GRAY}"/><path d="M.5 1h14v2H.5z" fill="#8e939a"/><path d="M3 6h5M3 9h4" stroke="${GRAY}"/><path d="M7 12l6-7 1.500 1.500-6 7z" fill="${ORANGE}"/>`)}
      </div>
      <div class="tree">
        <div class="folder">${folder(false, 'M5 9h5M7.500 6.500v5')}轴线</div>
        <div class="folder">${folder(true, 'M4.500 10h6')}消防</div>
        ${navItems.map((t, i) => html`<div class="child ${i === 0 ? 'on' : ''}">${ico(16, 16, navIcons[i])}${t}</div>`)}
        <div class="folder">${folder(false, 'M5 9h5M7.500 6.500v5')}建筑结构</div>
        <div class="folder">${folder(false, 'M5 9h5M7.500 6.500v5')}自定义</div>
      </div>
      <div class="nav-scroll"></div>
    </div>`;
  }

  private compPanel() {
    const caret = html`<span class="caret"></span>`;
    return html`<div class="panel comp-panel">
      <div class="closebar"></div>
      <div class="ptitle">构件列表</div>
      <div class="mid-tools">
        <div class="mt-row">
          <div class="mt">${ico(16, 17, svg`<path d="M3 2h8l4 4v10H3z" fill="#fff" stroke="#aaa"/><path d="M3 7h9M3 10h9" stroke="#ddd"/><path d="M0 0h5v5H0z" fill="${ORANGE}" opacity=".7"/>`)}新建</div>${caret}
          <div class="mt s11">${ico(16, 17, svg`<path d="M1 1h9l3 3v13H1z" fill="#fff" stroke="#aaa"/><rect x="7" y="10" width="8" height="7" fill="#e45858"/><path d="M9 12l4 3M13 12l-4 3" stroke="#fff"/>`)}删除</div>
          <div class="mt s14">${ico(17, 17, svg`<path d="M1 1h9v3H4v10H1z" fill="#fff" stroke="#aaa"/><path d="M5 4h7l4 4v9H5z" fill="#eef5fd" stroke="${BLUE}"/><path d="M7 9h6M7 11.500h6M7 14h6" stroke="${BLUE}"/>`)}复制</div>
          ${dbl}
        </div>
        <div class="mt-row">
          <div class="mt">${ico(16, 17, svg`<path d="M1 1h7v15H1z" fill="#fff" stroke="#aaa"/><text x="2" y="8" font-size="7" fill="${ORANGE}" font-family="Liberation Sans">A</text><text x="2" y="15" font-size="7" fill="#666" font-family="Liberation Sans">Z</text><path d="M12 1v14M10 12l2 3 2-3" fill="none" stroke="${BLUE}" stroke-width="1.200"/>`)}排序</div>${caret}
          <div class="mt s11">${ico(16, 17, svg`<path d="M0 1h14L9 8v8l-3-2V8z" fill="${BLUE}"/><path d="M11 12h4M11 15h4" stroke="${ORANGE}"/>`)}过滤</div>${caret}
          <div class="mt s11">${ico(15, 17, svg`<path d="M.5 1h14v15H.5z" fill="#fff" stroke="#8a9098"/><path d="M.5 13h14v3H.5z" fill="#8a9098"/><path d="M7.500 11V3M4 6l3.500-3.500L11 6" fill="none" stroke="${BLUE}" stroke-width="2"/>`)}上移</div>
          ${dbl}
        </div>
      </div>
      <div class="csearch">搜索构件...${ico(12, 12, svg`<circle cx="5" cy="5" r="4" fill="none" stroke="#2a80c8" stroke-width="1.300"/><path d="M8 8l3.500 3.500" stroke="#2a80c8" stroke-width="1.600"/>`)}</div>
      <div class="ctree">
        <div class="ctop"><span class="tri"></span>消火栓(消)</div>
        ${compItems.map((t, i) => html`<div class="comp ${i === 4 ? 'on' : ''}">${t}</div>`)}
      </div>
      <div class="h-scroll"></div>
    </div>`;
  }

  private propPanel() {
    return html`<div class="panel grow">
      <div class="closebar"></div>
      <div class="ptitle prop-title">属性</div>
      <div class="ptable">
        <div class="prow hd"><div></div><div>属性名称</div><div class="val">属性值</div></div>
        ${propRows.map(([n, v, l], i) => html`<div class="prow">
          <div class="no ${i === 13 ? 'on' : ''}">${i + 1}</div>
          <div class=${l ? 'link' : ''}>${n}</div>
          <div class=${i === 13 ? 'edit' : ''}>${v}</div>
        </div>`)}
        <div class="prow"><div class="no">15</div><div><span class="pm">+</span>显示样式</div><div></div></div>
        <div class="grid-foot"></div>
      </div>
      <div class="ptabs"><div class="ptab">图例</div><div class="ptab">实体建模</div></div>
    </div>`;
  }

  private drawingPanel() {
    return html`<div class="panel draw-panel">
      <div class="closebar"></div>
      <div class="ptitle">图纸导航</div>
      <div class="dtable">
        <div class="drow hd"><div></div><div class="val">图纸名称</div><div>比例</div><div>楼层</div><div>分层</div></div>
        <div class="drow"><div class="no">1</div><div class="left"><span class="pm">−</span>底图<span class="conn lt"></span></div><div></div><div></div><div></div></div>
        <div class="drow"><div class="no on">2</div><div class="left g sel"><span class="conn"></span><span class="model">模型</span></div><div class="g">1:1</div><div class="g">工作面层</div><div class="g left">分层1</div></div>
      </div>
      <div class="dfoot"></div>
    </div>`;
  }

  private layerPanel() {
    return html`<div class="panel grow">
      <div class="closebar"></div>
      <div class="ptitle">CAD图层</div>
      <div class="layer-tools"><span>显示指定图层</span><span>隐藏指定图层</span><span>显示指定图元</span>${dbl}</div>
      <div class="lrow hd"><div>开/关</div><div>颜色</div><div>名称</div></div>
      <div class="lrow b"><div class="c"><span class="chk"></span></div><div class="c"><span class="ptri"></span></div><div>已提取的CAD图层</div></div>
      <div class="lrow b"><div class="c"><span class="chk"><i></i></span></div><div class="c"><span class="ptri"></span></div><div>CAD原始图层</div></div>
    </div>`;
  }

  private status() {
    return html`<div class="status">
      <span class="s-coord">X = 496699.28 Y = 263202.91</span>
      <span class="s-h">层高 : 2.8</span><span class="s-b">底标高 : 450</span><span class="s-n">1(6)</span>
      <div class="sb w24">${ico(14, 14, svg`<path d="M3 1v11h10" fill="none" stroke="#444"/><path d="M3 9h4v3" fill="none" stroke="#444"/>`)}</div>
      <div class="sb w36 sel2">${ico(14, 18, svg`<path d="M2 3h10v13H2z" fill="#fff" stroke="${BLUE}"/><rect x="0" y="0" width="5" height="6" fill="${ORANGE}"/>`)}${ico(5, 4, svg`<path d="M0 0h5L2.500 4z" fill="#666"/>`)}</div>
      <div class="sb w36">${ico(16, 14, svg`<path d="M3 2v5M.5 4.500h5" stroke="#444"/><rect x="6" y="8" width="9" height="5" fill="#333"/>`)}${ico(5, 4, svg`<path d="M0 0h5L2.500 4z" fill="#666"/>`)}</div>
      <div class="sb w24">${ico(14, 16, svg`<path d="M1 1l12 14M13 1L1 15" stroke="#999"/>`)}</div>
      <div class="sb w36">${ico(16, 14, svg`<path d="M1 13h13M2 13l9-10" fill="none" stroke="#444"/><path d="M7 7l3 6" stroke="#444" stroke-width="1.200"/>`)}${ico(5, 4, svg`<path d="M0 0h5L2.500 4z" fill="#666"/>`)}</div>
      <div class="sb t1">跨类型选择</div>
      <div class="sb t2">折线选择</div>
      <span>CAD图亮度 : 100%</span>
      <span class="zoom-c first">−</span><span class="track"><i class="thumb"></i></span><span class="zoom-c">+</span>
      <span class="hint">按鼠标左键指定第一个角点</span>
      <span class="fps">500 FPS</span>
      <div class="multi"><b>多视图</b><i class="sq"></i><span class="x">X</span></div>
    </div>`;
  }

  render() {
    return html`
      ${this.head()}
      ${this.ribbon()}
      ${this.combos()}
      <div class="main">
        <div class="col">${this.navPanel()}</div>
        <div></div>
        <div class="col">${this.compPanel()}<div class="gap-h a"></div>${this.propPanel()}</div>
        <div class="split"></div>
        <div class="canvas">
          <svg width="1202" height="820" viewBox="400.5 186.5 1202 820">${cad}</svg>
        </div>
        <div class="split"></div>
        <div class="col">${this.drawingPanel()}<div class="gap-h b"></div>${this.layerPanel()}</div>
      </div>
      ${this.status()}
      <div class="task"><div class="orb"></div><div class="tbtn"></div><div class="tbtn"></div><div class="tbtn"></div><div class="tbtn"></div><div class="tbtn"></div></div>
      <div class="speed">
        <div class="s-pill"><div><em class="u"></em>0.2<small>K/s</small></div><div><em class="d"></em>0.5<small>K/s</small></div></div>
        <div class="s-circle">36<small>%</small>
          <svg width="60" height="60" viewBox="0 0 60 60"><path d="M30 3a27 27 0 0124 39" fill="none" stroke="#5fd6b8" stroke-width="1.500"/></svg>
        </div>
      </div>`;
  }
}
